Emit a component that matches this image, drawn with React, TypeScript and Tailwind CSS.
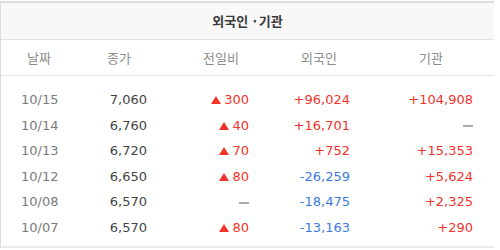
import React from "react";

interface Row {
  date: string;
  close: string;
  diff: string | null;
  foreign: string;
  inst: string | null;
}

const rows: Row[] = [
  { date: "10/15", close: "7,060", diff: "300", foreign: "+96,024", inst: "+104,908" },
  { date: "10/14", close: "6,760", diff: "40", foreign: "+16,701", inst: null },
  { date: "10/13", close: "6,720", diff: "70", foreign: "+752", inst: "+15,353" },
  { date: "10/12", close: "6,650", diff: "80", foreign: "-26,259", inst: "+5,624" },
  { date: "10/08", close: "6,570", diff: null, foreign: "-18,475", inst: "+2,325" },
  { date: "10/07", close: "6,570", diff: "80", foreign: "-13,163", inst: "+290" },
];

const num = { fontFamily: '"DejaVu Sans", Verdana, sans-serif' };
const kr = { fontFamily: '"Noto Sans CJK KR", "Noto Sans", sans-serif' };

const Dash = () => <span className="inline-block h-[2px] w-[10px] bg-[#aaa] align-middle" />;

const color = (v: string) => (v.startsWith("-") ? "text-[#3b7be0]" : "text-[#f2332c]");

export default function App() {
  return (
    <div className="h-[250px] w-[500px] bg-white">
      <div className="mt-px w-[494px] border-t-2 border-l border-[#dcdcdc]">
        <div
          className="flex h-[37px] items-center justify-center border-b border-[#e3e3e3] bg-[#f8f8f8] text-[13px] font-bold text-[#3a3a3a]"
          style={kr}
        >
          외국인 ·기관
        </div>
        <div
          className="grid h-[36px] grid-cols-[76px_84px_120px_76px_138px] border-b border-[#e6e6e6] pt-[8px] text-[13px] text-[#8c8c8c]"
          style={kr}
        >
          <div className="text-center">날짜</div>
          <div className="text-center">종가</div>
          <div className="text-center">전일비</div>
          <div className="text-center">외국인</div>
          <div className="pl-[10px] text-center">기관</div>
        </div>
        <div className="border-b-2 border-[#ececec] pt-[11px] pb-[5px] text-[13px]" style={num}>
          {rows.map((r) => (
            <div
              key={r.date}
              className="grid h-[25.6px] grid-cols-[76px_84px_120px_76px_138px] items-center"
            >
              <div className="pl-[20px] text-[#7a7a7a]">{r.date}</div>
              <div className="pr-[14px] text-right text-[#444]">{r.close}</div>
              <div className="pr-[32px] text-right text-[#f2332c]">
                {r.diff ? (
                  <span className="inline-flex items-center">
                    <span className="mr-[3px] inline-block h-0 w-0 border-x-[5px] border-b-[8px] border-x-transparent border-b-[#f2332c]" />
                    {r.diff}
                  </span>
                ) : (
                  <Dash />
                )}
              </div>
              <div className={`pr-[7px] text-right ${color(r.foreign)}`}>{r.foreign}</div>
              <div className={`pr-[22px] text-right ${r.inst ? color(r.inst) : ""}`}>
                {r.inst ?? <Dash />}
              </div>
            </div>
          ))}
        </div>
      </div>
    </div>
  );
}
